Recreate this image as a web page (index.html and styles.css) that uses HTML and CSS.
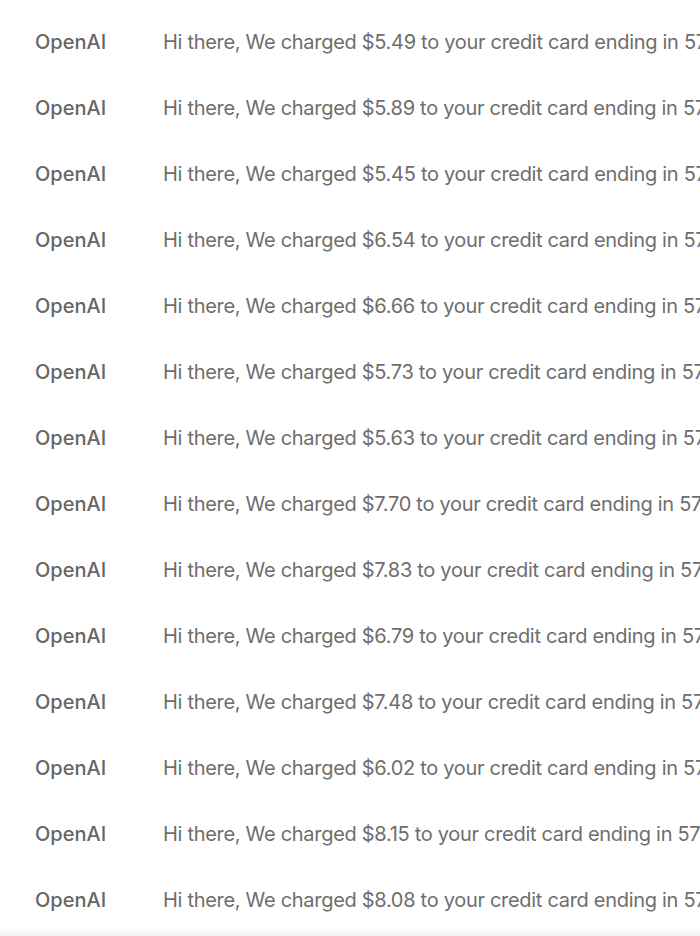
FILE: index.html
```html
<!DOCTYPE html>
<html lang="en">
<head>
<meta charset="utf-8">
<title>Inbox</title>
<link rel="stylesheet" href="styles.css">
</head>
<body>
<ul class="list">
  <li class="row"><span class="sender">OpenAI</span><span class="msg">Hi there, We charged $5.49 to your credit card ending in 5720. View your receipt</span></li>
  <li class="row"><span class="sender">OpenAI</span><span class="msg">Hi there, We charged $5.89 to your credit card ending in 5720. View your receipt</span></li>
  <li class="row"><span class="sender">OpenAI</span><span class="msg">Hi there, We charged $5.45 to your credit card ending in 5720. View your receipt</span></li>
  <li class="row"><span class="sender">OpenAI</span><span class="msg">Hi there, We charged $6.54 to your credit card ending in 5720. View your receipt</span></li>
  <li class="row"><span class="sender">OpenAI</span><span class="msg">Hi there, We charged $6.66 to your credit card ending in 5720. View your receipt</span></li>
  <li class="row"><span class="sender">OpenAI</span><span class="msg">Hi there, We charged $5.73 to your credit card ending in 5720. View your receipt</span></li>
  <li class="row"><span class="sender">OpenAI</span><span class="msg">Hi there, We charged $5.63 to your credit card ending in 5720. View your receipt</span></li>
  <li class="row"><span class="sender">OpenAI</span><span class="msg">Hi there, We charged $7.70 to your credit card ending in 5720. View your receipt</span></li>
  <li class="row"><span class="sender">OpenAI</span><span class="msg">Hi there, We charged $7.83 to your credit card ending in 5720. View your receipt</span></li>
  <li class="row"><span class="sender">OpenAI</span><span class="msg">Hi there, We charged $6.79 to your credit card ending in 5720. View your receipt</span></li>
  <li class="row"><span class="sender">OpenAI</span><span class="msg">Hi there, We charged $7.48 to your credit card ending in 5720. View your receipt</span></li>
  <li class="row"><span class="sender">OpenAI</span><span class="msg">Hi there, We charged $6.02 to your credit card ending in 5720. View your receipt</span></li>
  <li class="row"><span class="sender">OpenAI</span><span class="msg">Hi there, We charged $8.15 to your credit card ending in 5720. View your receipt</span></li>
  <li class="row"><span class="sender">OpenAI</span><span class="msg">Hi there, We charged $8.08 to your credit card ending in 5720. View your receipt</span></li>
</ul>
<div class="fade"></div>
</body>
</html>
```
FILE: styles.css
```css
html, body {
  margin: 0;
  padding: 0;
  background: #ffffff;
  overflow: hidden;
  height: 936px;
}
body {
  font-family: Inter, "Noto Sans", sans-serif;
  font-size: 20px;
  color: #6b6b6b;
}
.list {
  list-style: none;
  margin: 0;
  padding: 9px 0 0 0;
}
.row {
  display: flex;
  align-items: center;
  height: 66px;
  white-space: nowrap;
  overflow: hidden;
}
.sender {
  flex: 0 0 auto;
  width: 128px;
  padding-left: 35px;
  font-weight: 500;
  color: #666666;
}
.msg {
  flex: 0 0 auto;
  color: #6e6e6e;
  letter-spacing: -0.3px;
}
.fade {
  position: fixed;
  left: 0;
  right: 0;
  bottom: 0;
  height: 8px;
  background: linear-gradient(to bottom, rgba(240,240,240,0), #f1f1f1);
}
```
